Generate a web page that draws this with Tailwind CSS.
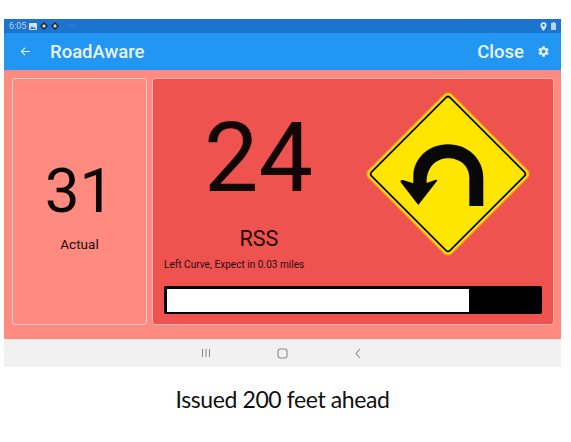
<!DOCTYPE html>
<html lang="en">
  <head>
    <meta charset="UTF-8" />
    <meta name="viewport" content="width=device-width, initial-scale=1.0" />
    <title>RoadAware</title>
    <script src="https://cdn.jsdelivr.net/npm/@tailwindcss/browser@4"></script>
  </head>
  <body class="bg-white font-['Roboto',sans-serif]">
    <div class="w-[571px] h-[442px] overflow-hidden pt-[19px] pl-[4px]">
      <div class="w-[557px]">
        <!-- status bar -->
        <div class="h-[14px] bg-[#1c74cf] flex items-center justify-between pl-[5px] pr-[5px] text-[#b9d3ee]">
          <div class="flex items-center gap-[3px]">
            <span class="text-[9px] leading-none">6:05</span>
            <svg class="w-[8px] h-[7px]" viewBox="0 0 8 7"><rect width="8" height="7" rx="1" fill="#d5e5f6" /><path d="M1 6l2-3 1.500 2L5.500 4 7 6z" fill="#1c74cf" /></svg>
            <svg class="w-[8px] h-[8px]" viewBox="0 0 10 10"><path d="M5 0l5 5-5 5-5-5z" fill="#1b2440" /><path d="M5 2.500L7.500 5 5 7.500 2.500 5z" fill="#e2d9a0" /></svg>
            <svg class="w-[8px] h-[8px]" viewBox="0 0 10 10"><path d="M5 0l5 5-5 5-5-5z" fill="#1b2440" /><path d="M5 2.500L7.500 5 5 7.500 2.500 5z" fill="#e2d9a0" /></svg>
            <span class="text-[7px] leading-none ml-[6px] text-[#6fa6e0]">····</span>
          </div>
          <div class="flex items-center gap-[4px]">
            <svg class="w-[7px] h-[9px]" viewBox="0 0 8 10"><path fill-rule="evenodd" d="M4 0a3.500 3.500 0 0 1 3.500 3.500C7.500 6 4 10 4 10S.5 6 .5 3.500A3.500 3.500 0 0 1 4 0zm0 2a1.500 1.500 0 1 0 0 3 1.500 1.500 0 0 0 0-3z" fill="#dbe8f7" /></svg>
            <svg class="w-[5px] h-[8px]" viewBox="0 0 5 8"><path d="M1.500 0h2v1H5v7H0V1h1.500z" fill="#b9d3ee" /></svg>
          </div>
        </div>

        <!-- app bar -->
        <div class="h-[37px] bg-[#2196f3] flex items-center text-white">
          <svg class="w-[11px] h-[11px] ml-[16px]" viewBox="0 0 12 12" fill="none" stroke="#e6f3fe" stroke-width="1.200"><path d="M11 6H1.500M5.500 2L1.500 6l4 4" /></svg>
          <span class="ml-[19px] mt-[2px] text-[18.500px] font-medium text-[#e9f5fe] leading-none">RoadAware</span>
          <span class="ml-auto mt-[2px] text-[18.500px] font-medium text-[#e9f5fe] leading-none">Close</span>
          <svg class="w-[13px] h-[13px] ml-[13px] mr-[11px] -mt-[1px]" viewBox="0 0 24 24"><path fill="#e9f5fe" d="M19.140 12.940c.04-.3.060-.61.060-.94s-.02-.64-.07-.94l2.030-1.580a.49.490 0 0 0 .12-.61l-1.920-3.320a.49.490 0 0 0-.59-.22l-2.390.96a7 7 0 0 0-1.620-.94l-.36-2.540a.48.480 0 0 0-.48-.41h-3.840a.48.480 0 0 0-.47.410l-.36 2.540a7.300 7.300 0 0 0-1.620.94l-2.390-.96a.48.480 0 0 0-.59.220L2.740 8.870a.48.480 0 0 0 .12.610l2.030 1.580c-.05.3-.09.63-.09.940s.02.64.07.94l-2.030 1.580a.49.490 0 0 0-.12.61l1.920 3.320c.12.220.37.290.59.220l2.390-.96c.5.380 1.030.7 1.620.94l.36 2.540c.05.240.24.410.48.410h3.840c.24 0 .44-.17.47-.41l.36-2.540a7 7 0 0 0 1.620-.94l2.390.96c.22.080.47 0 .59-.22l1.920-3.320a.47.470 0 0 0-.12-.61zM12 15.600a3.600 3.600 0 1 1 0-7.200 3.600 3.600 0 0 1 0 7.200z" /></svg>
        </div>

        <!-- main area -->
        <div class="h-[269px] bg-[#ff8a80] pt-[8px] pl-[8px] pr-[7px] flex gap-[5px] items-start">
          <div class="w-[135px] h-[247px] bg-[#ff8a80] border border-[#ffcdc8] rounded-[3px] flex flex-col items-center text-black">
            <span class="mt-[76px] text-[62px] leading-[72px] text-[#0b0505]">31</span>
            <span class="mt-[8px] text-[13.500px] leading-[18px] text-[#1c0b0a]">Actual</span>
          </div>
          <div class="w-[402px] h-[247px] bg-[#ef5350] border border-[#f6b5b3] rounded-[3px] pl-[11px] pr-[11px] flex flex-col">
            <div class="flex h-[181px]">
              <div class="w-[190px] flex flex-col">
                <span class="mt-[26px] text-[97px] leading-[106px] text-center text-[#120505] -ml-[1px]">24</span>
                <span class="mt-[16px] text-[21.500px] leading-[24px] text-center text-[#1c0808]">RSS</span>
                <span class="mt-[7px] text-[10.100px] leading-[14px] whitespace-nowrap text-[#2a0d0d]">Left Curve, Expect in 0.03 miles</span>
              </div>
              <svg class="w-[166px] h-[166px] mt-[12px] ml-[11px]" viewBox="0 0 166 166">
                <rect x="24.500" y="24.500" width="117" height="117" rx="5" transform="rotate(45 83 83)" fill="#ffe600" stroke="#f5b81c" stroke-width="1.500" />
                <rect x="27.500" y="27.500" width="111" height="111" rx="3" transform="rotate(45 83 83)" fill="none" stroke="#0a0a00" stroke-width="1.800" />
                <path d="M118.300 115H104.300V86.700C104.300 75 95 67.300 83 67.300C70 67.300 61 78 61.700 92L70 89Q73 88 72 90L53.300 114L35.500 91Q35 88.500 38 89L48.300 92.300V86C48 68 63 53.300 83 53.300C103 53.300 118.300 68 118.300 87Z" fill="#080808" />
              </svg>
            </div>
            <div class="mt-[26px] h-[28px] w-[378px] bg-black rounded-[2px] p-[2.500px] pr-[73px]">
              <div class="h-full bg-white"></div>
            </div>
          </div>
        </div>

        <!-- android nav -->
        <div class="h-[28px] bg-[#f1f1f1] flex items-center">
          <svg class="w-[10px] h-[10px] ml-[197px]" viewBox="0 0 10 10" stroke="#8c8c8c" stroke-width="1.100"><path d="M1.500 1v8M5 1v8M8.500 1v8" /></svg>
          <svg class="w-[11px] h-[11px] ml-[66px]" viewBox="0 0 11 11" fill="none" stroke="#8c8c8c" stroke-width="1.100"><rect x="1" y="1" width="9" height="9" rx="2.500" /></svg>
          <svg class="w-[8px] h-[11px] ml-[66px]" viewBox="0 0 8 11" fill="none" stroke="#8c8c8c" stroke-width="1.100"><path d="M6 1L2 5.500 6 10" /></svg>
        </div>

        <p class="mt-[18px] text-center font-['Lato',sans-serif] text-[23px] tracking-[-0.4px] leading-[28px] text-[#111]">Issued 200 feet ahead</p>
      </div>
    </div>
  </body>
</html>
